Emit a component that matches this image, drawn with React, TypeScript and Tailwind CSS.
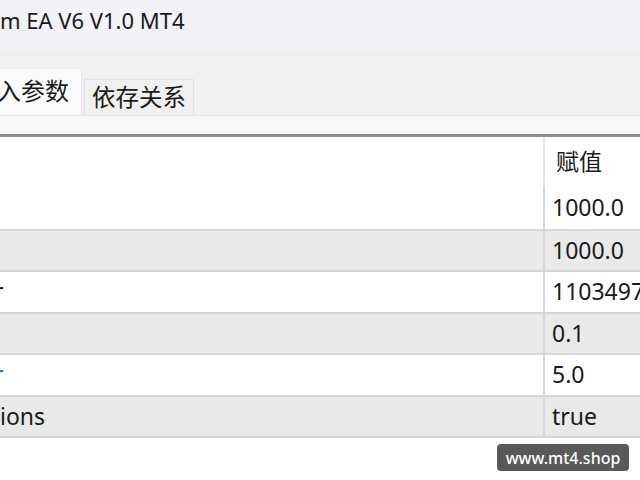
const FONT = '"Noto Sans", "Noto Sans CJK SC", sans-serif'

type Row = { name: string; nameClass?: string; value: string; shaded: boolean }

const rows: Row[] = [
  { name: '', value: '1000.0', shaded: false },
  { name: '', value: '1000.0', shaded: true },
  { name: 'r', nameClass: '-ml-[6px] text-[#1a1a1a]', value: '110349726', shaded: false },
  { name: '', value: '0.1', shaded: true },
  { name: 'r', nameClass: '-ml-[6px] text-[#1e6fd9]', value: '5.0', shaded: false },
  { name: 'ions', nameClass: 'text-[#1a1a1a]', value: 'true', shaded: true },
]

export default function App() {
  return (
    <div
      className="relative h-[480px] w-[640px] overflow-hidden bg-white text-[#1a1a1a]"
      style={{ fontFamily: FONT }}
    >
      {/* title bar */}
      <div className="flex h-[50px] items-center bg-[#f2f2f7] pb-[10px] text-[22px] leading-none whitespace-nowrap">
        m EA V6 V1.0 MT4
      </div>

      {/* tabs */}
      <div className="flex h-[65px] items-end bg-[#f0f0f0]">
        <div className="-ml-[27px] flex h-[46px] w-[109px] shrink-0 items-center border-r border-[#e4e4e4] bg-[#fbfbfb] pb-[2px] text-[24px] leading-none whitespace-nowrap">
          输入参数
        </div>
        <div className="ml-[2px] flex h-[36px] shrink-0 items-center border border-b-0 border-[#e2e2e2] bg-[#f0f0f0] px-[7px] text-[23.5px] leading-none whitespace-nowrap">
          依存关系
        </div>
      </div>
      <div className="h-[19px] border-t border-[#e6e6e6] bg-[#f8f8f8]" />
      <div className="h-[3px] bg-[#8e8e8e]" />

      {/* parameter table */}
      <div className="flex h-[50px] text-[23px] leading-none">
        <div className="w-[545px] shrink-0 border-r-2 border-[#e4e4e4]" />
        <div className="flex items-center pb-[2px] pl-[11px]">赋值</div>
      </div>
      {rows.map((r, i) => (
        <div
          key={i}
          className={
            'flex h-[41.5px] text-[23px] leading-none whitespace-nowrap ' +
            (i > 0 ? 'border-t-2 border-[#d6d6d6] ' : '') +
            (r.shaded ? 'bg-[#e9e9e9]' : 'bg-white')
          }
        >
          <div className="flex w-[545px] shrink-0 items-center overflow-hidden border-r-2 border-[#d6d6d6]">
            <span className={r.nameClass}>{r.name}</span>
          </div>
          <div className="flex items-center pl-[7px]">{r.value}</div>
        </div>
      ))}
      <div className="h-[2px] bg-[#d6d6d6]" />

      {/* watermark */}
      <div className="absolute left-[497px] top-[444px] flex h-[27px] w-[132px] items-center justify-center rounded-[4px] bg-[#595959] text-[16px] font-medium leading-none text-white">
        www.mt4.shop
      </div>
    </div>
  )
}
